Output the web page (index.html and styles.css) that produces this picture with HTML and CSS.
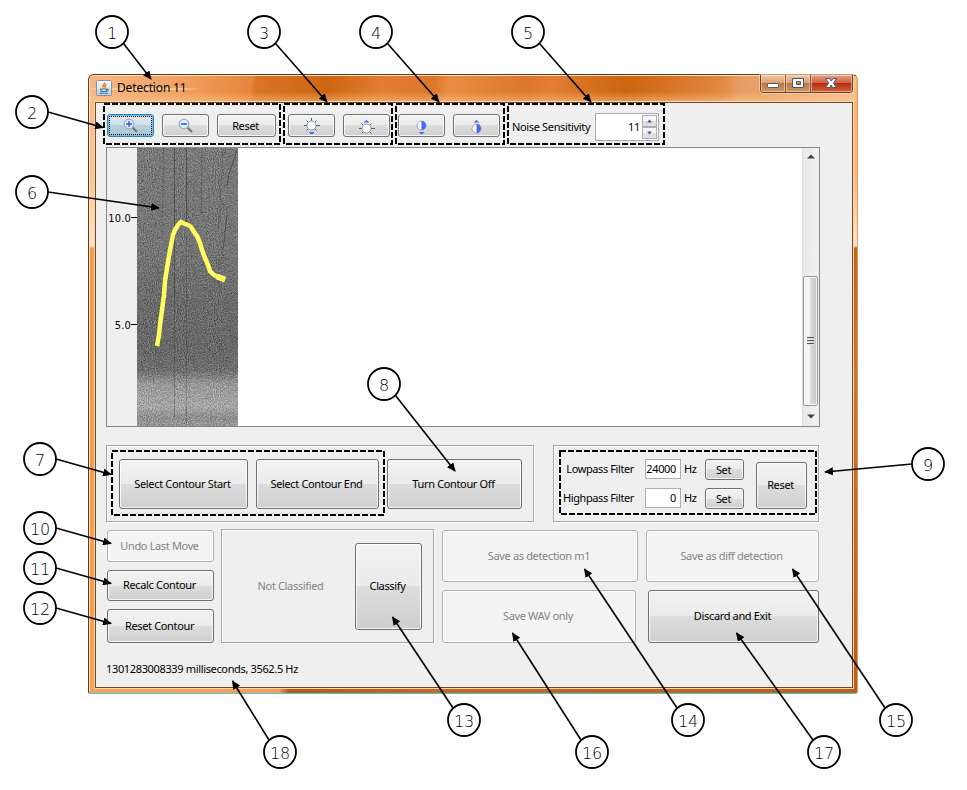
FILE: index.html
```html
<!DOCTYPE html>
<html lang="en">
<head>
<meta charset="utf-8">
<title>Detection 11</title>
<link rel="stylesheet" href="styles.css">
</head>
<body>
<div class="window">
  <header class="titlebar">
    <svg class="app-icon" width="16" height="16" viewBox="0 0 16 16">
      <defs><linearGradient id="ic" x2="0" y2="1"><stop offset="0" stop-color="#fdfdfd"/><stop offset="1" stop-color="#b9cbd8"/></linearGradient></defs>
      <rect x=".5" y=".5" width="15" height="15" rx="1" fill="url(#ic)" stroke="#8295a5"/>
      <path d="M8.500 2.500c1 1.500-2.500 2.500-1.500 5M10.500 4.500c-2 1-2 1.500-1.200 3.500" fill="none" stroke="#e8741c" stroke-width="1.500"/>
      <path d="M4.500 9h6v2.500H5.200zM10.800 9.200c2-.6 2 1.600-.3 1.900M3.500 13.200h8.500" fill="none" stroke="#4b7796" stroke-width="1.100"/>
    </svg>
    <span class="title">Detection 11</span>
    <div class="caption">
      <span class="cap"><svg width="25" height="17"><rect x="6.500" y="8.500" width="11" height="4" rx="1" fill="#fff" stroke="#535666"/></svg></span>
      <span class="cap"><svg width="25" height="17"><path d="M6.500 3.500h11v9h-11z M10.500 6.500h4v3h-4z" fill="#fff" fill-rule="evenodd" stroke="#535666"/></svg></span>
      <span class="cap close"><svg width="42" height="17"><path d="M14.500 3.500h4l1.800 2.500 1.800-2.500h3.400l-3 4.500 3 4.500h-4l-1.400-2.500-1.600 2.500h-4l3.200-4.500z" fill="#fff" stroke="#535666"/></svg></span>
    </div>
  </header>
  <main class="client">
    <div class="toolbar">
      <button class="btn tool focused"><svg width="18" height="18" viewBox="0 0 18 18"><path d="M10.500 10.500l4.500 4.500" stroke="#777" stroke-width="2.200"/><circle cx="7" cy="7" r="4.800" fill="#e4ecff" stroke="#9badd6" stroke-width="1.300"/><path d="M4 7h6M7 4v6" stroke="#3558dd" stroke-width="1.400"/></svg></button>
      <button class="btn tool"><svg width="18" height="18" viewBox="0 0 18 18"><path d="M10.500 10.500l4.500 4.500" stroke="#777" stroke-width="2.200"/><circle cx="7" cy="7" r="4.800" fill="#e4ecff" stroke="#9badd6" stroke-width="1.300"/><path d="M4 7h6" stroke="#3558dd" stroke-width="1.600"/></svg></button>
      <button class="btn tool reset">Reset</button>
      <button class="btn tool group"><svg width="18" height="18" viewBox="0 0 18 18"><path d="M8.500 1v3M1 8.500h3M13 8.500h4M3.500 3.500l2 2M13.500 3.500l-2 2M3.500 13.500l2-2M13.500 13.500l-2-2" stroke="#4a528f"/><circle cx="8.500" cy="8.500" r="4.500" fill="#fff" stroke="#8a98a8"/><path d="M6 15h5.500l-1.500 2h-2.500z" fill="#4668f0"/></svg></button>
      <button class="btn tool"><svg width="18" height="18" viewBox="0 0 18 18"><path d="M1 11.500h3M13 11.500h4M3.500 6.500l2 2M13.500 6.500l-2 2M3.500 16.500l2-2M13.500 16.500l-2-2" stroke="#4a528f"/><circle cx="8.500" cy="11.500" r="4.500" fill="#fff" stroke="#8a98a8"/><path d="M5.500 5.500l3-2.500 3 2.500z" fill="#4668f0"/></svg></button>
      <button class="btn tool"><svg width="18" height="18" viewBox="0 0 18 18"><circle cx="8.500" cy="8.500" r="4.500" fill="#fff" stroke="#9aa3b5"/><path d="M8.500 4a4.500 4.500 0 0 1 0 9zM6 15h5.500l-1.500 2h-2.500z" fill="#4668f0"/></svg></button>
      <button class="btn tool"><svg width="18" height="18" viewBox="0 0 18 18"><circle cx="8.500" cy="11.500" r="4.500" fill="#fff" stroke="#9aa3b5"/><path d="M8.500 7a4.500 4.500 0 0 1 0 9zM5.500 5.500l3-2.500 3 2.500z" fill="#4668f0"/></svg></button>
      <label class="noise">Noise Sensitivity</label>
      <div class="spinner"><span>11</span>
        <div class="arrows">
          <i><svg width="13" height="10"><path d="M4 6.500h5L6.500 3.500z" fill="#4257a5"/></svg></i>
          <i><svg width="13" height="10"><path d="M4 3.500h5L6.500 6.500z" fill="#4257a5"/></svg></i>
        </div>
      </div>
    </div>

    <div class="viewport">
      <svg class="spectrum" width="131" height="278" viewBox="107 148 131 278">
        <defs>
          <linearGradient id="sg" x2="0" y2="1">
            <stop offset="0" stop-color="#797979"/><stop offset=".35" stop-color="#757575"/>
            <stop offset=".55" stop-color="#6b6b6b"/><stop offset=".72" stop-color="#686868"/>
            <stop offset=".8" stop-color="#6e6e6e"/><stop offset=".85" stop-color="#989898"/>
            <stop offset=".93" stop-color="#a6a6a6"/><stop offset=".97" stop-color="#8e8e8e"/><stop offset="1" stop-color="#969696"/>
          </linearGradient>
          <filter id="grain" x="0" y="0" width="1" height="1" color-interpolation-filters="sRGB">
            <feTurbulence type="fractalNoise" baseFrequency=".97 .73" numOctaves="3" seed="11"/>
            <feColorMatrix values=".5 .5 0 0 0 .5 .5 0 0 0 .5 .5 0 0 0 0 0 0 0 1" result="n"/>
            <feComposite in="SourceGraphic" in2="n" operator="arithmetic" k2="1" k3=".62" k4="-.31"/>
            <feColorMatrix values="1 0 0 0 0 0 1 0 0 0 0 0 1 0 0 0 0 0 0 1"/>
          </filter>
        </defs>
        <rect x="107" y="148" width="30" height="278" fill="#efefef"/>
        <rect x="137" y="148" width="101" height="278" fill="url(#sg)" filter="url(#grain)"/>
        <g fill="none" stroke="#333" stroke-opacity=".55">
          <path d="M174.500 148v152M186.500 148v75"/>
          <path d="M174.500 300v120M186.500 235v188M163.500 148l-1 70M202 150l-1 65M223 150l-3 50M221 200l-3 30M219 260v28" stroke-opacity=".3"/>
          <path d="M237 150l-8 24-2 12M227 215l-4 35"/>
        </g>
        <path d="M157 346L159 335L160 325L162 310L164 295L165 281L167 268L169 256L171 245L173 235L175 230L178 225L181 222L184 223.500L188 225L191 227L194 232L197 236L200 243L202 250L205 258L208 265L210 271L214 275L218 277L225 280" fill="none" stroke="#ffff5f" stroke-width="4.500"/>
        <path d="M217 276.500l8 3" stroke="#ffff5f" stroke-width="6"/>
        <path d="M131 217.500h6M131 324.500h6" stroke="#000"/>
        <text x="131" y="222" text-anchor="end" class="axis">10.0</text>
        <text x="131" y="329" text-anchor="end" class="axis">5.0</text>
      </svg>
      <div class="blank"></div>
      <div class="scrollbar">
        <svg width="16" height="17"><path d="M4 10.500h8l-4-4z" fill="#444"/></svg>
        <div class="thumb"><b></b><b></b><b></b></div>
        <svg width="16" height="20"><path d="M4 8.500h8l-4 4z" fill="#444"/></svg>
      </div>
    </div>

    <div class="row panels">
      <section class="panel contour">
        <button class="btn start">Select Contour Start</button>
        <button class="btn end">Select Contour End</button>
        <button class="btn off">Turn Contour Off</button>
      </section>
      <section class="panel filters">
        <div class="fields">
          <label>Lowpass Filter</label><span class="field">24000</span><span>Hz</span><button class="btn">Set</button>
          <label>Highpass Filter</label><span class="field">0</span><span>Hz</span><button class="btn">Set</button>
        </div>
        <button class="btn filter-reset">Reset</button>
      </section>
    </div>

    <div class="row lower">
      <div class="moves">
        <button class="btn undo" disabled>Undo Last Move</button>
        <button class="btn recalc">Recalc Contour</button>
        <button class="btn clear">Reset Contour</button>
      </div>
      <section class="panel classify">
        <span class="state">Not Classified</span>
        <button class="btn classify-btn">Classify</button>
      </section>
      <div class="saves">
        <div class="row"><button class="btn m1" disabled>Save as detection m1</button><button class="btn diff" disabled>Save as diff detection</button></div>
        <div class="row second"><button class="btn wav" disabled>Save WAV only</button><button class="btn exit">Discard and Exit</button></div>
      </div>
    </div>
    <footer class="status">1301283008339 milliseconds, 3562.5 Hz</footer>
  </main>
</div>

<svg class="callouts" width="967" height="790" viewBox="0 0 967 790">
  <defs><marker id="head" markerUnits="userSpaceOnUse" markerWidth="9" markerHeight="8" refX="8" refY="4" orient="auto"><path d="M0 0L9 4L0 8z"/></marker></defs>
  <g class="dashes">
    <rect x="104" y="104" width="176" height="40"/>
    <rect x="284" y="104" width="108" height="40"/>
    <rect x="396" y="104" width="108" height="40"/>
    <rect x="508" y="104" width="156" height="40"/>
    <rect x="112" y="451" width="272" height="64"/>
    <rect x="560" y="451" width="256" height="63"/>
  </g>
  <g class="arrows-out">
    <path d="M123.500 43.500L151 79"/><path d="M48 112L103 127.500"/><path d="M275.500 43.500L327 102"/><path d="M387.500 43.500L439 102"/><path d="M539.500 43.500L591 102"/>
    <path d="M48 192L159 208"/><path d="M56 459L111 474.500"/><path d="M395.500 395.500L455 471"/><path d="M912 464L825 472"/>
    <path d="M56 528L111 543.500"/><path d="M56 568L111 583.500"/><path d="M56 608L111 623.500"/>
    <path d="M453 708L392.500 617"/><path d="M677 708L584.500 569"/><path d="M885 708L792.500 569"/><path d="M581 740L512.500 633"/><path d="M813 740L736.500 633"/><path d="M269 740L232.500 681"/>
  </g>
  <g class="rings">
    <circle cx="112" cy="32" r="16"/><circle cx="32" cy="112" r="16"/><circle cx="264" cy="32" r="16"/><circle cx="376" cy="32" r="16"/><circle cx="528" cy="32" r="16"/>
    <circle cx="32" cy="192" r="16"/><circle cx="40" cy="459" r="16"/><circle cx="384" cy="384" r="16"/><circle cx="928" cy="464" r="16"/>
    <circle cx="40" cy="528" r="16"/><circle cx="40" cy="568" r="16"/><circle cx="40" cy="608" r="16"/>
    <circle cx="464" cy="720" r="16"/><circle cx="688" cy="720" r="16"/><circle cx="896" cy="720" r="16"/><circle cx="592" cy="752" r="16"/><circle cx="824" cy="752" r="16"/><circle cx="280" cy="752" r="16"/>
  </g>
  <g class="numbers">
    <text x="112" y="39">1</text><text x="32" y="119">2</text><text x="264" y="39">3</text><text x="376" y="39">4</text><text x="528" y="39">5</text>
    <text x="32" y="199">6</text><text x="40" y="466">7</text><text x="384" y="391">8</text><text x="928" y="471">9</text>
    <text x="40" y="535">10</text><text x="40" y="575">11</text><text x="40" y="615">12</text>
    <text x="464" y="727">13</text><text x="688" y="727">14</text><text x="896" y="727">15</text><text x="592" y="759">16</text><text x="824" y="759">17</text><text x="280" y="759">18</text>
  </g>
</svg>
</body>
</html>
```
FILE: styles.css
```css
* { box-sizing: border-box; }
body { margin: 0; width: 967px; height: 790px; overflow: hidden; background: #fff; padding: 74px 0 0 88px; font: 11px/13px "Noto Sans", sans-serif; letter-spacing: -.35px; color: #000; }
.window {
  width: 770px; height: 620px; padding: 0 5px 6px 6px;
  border: 1px solid #6b3710; border-bottom-color: #55c5dc; border-right-color: #e9964e; border-radius: 6px 6px 3px 3px;
  background:
    linear-gradient(90deg, #f4a459, #f4a053 190px, #b25a14 200px, #c46822 45%, #b9601a) bottom / 100% 7px no-repeat,
    linear-gradient(#f6b888, #f9c595 100px, #fbe3cf 171px, #f09a4e 173px, #f4a256) left / 8px 100% no-repeat,
    linear-gradient(#f5b27a, #f9bd8a 110px, #fce6d4 171px, #bd641d 173px, #c97430 300px, #b8601a) right / 8px 100% no-repeat,
    #e88b40;
  box-shadow: inset 1px 1px #fde0c0;
}
.titlebar { height: 26px; display: flex; align-items: flex-start; margin: 1px -4px 0 -5px; padding: 0 0 0 6px;
  background:
    linear-gradient(rgba(255,255,255,.03) 0 60%, rgba(255,205,150,.55)),
    radial-gradient(ellipse at 52px 13px, rgba(255,240,225,.7), rgba(255,230,205,.5) 50px, transparent 65px),
    linear-gradient(100deg, #f6b581, #ee9b55 100px, #e58136 160px, #d97020 165px, #cd6009 235px, #e07a2b 290px, #db7324 340px, #e9893c 355px, #d97325 430px, #e07a2c 455px, #ca6007 530px, #db7628 590px, #e1853c 625px, #e59a5e 640px, #f0a76f 690px, #f8bd8b); }
.app-icon { margin-top: 4px; }
.title { margin: 4px 0 0 5px; font-size: 12px; line-height: 16px; letter-spacing: -.15px; }
.caption { margin: -1px 0 0 auto; display: flex; height: 18px; border: 1px solid #66402a; border-top: 0; border-radius: 0 0 4px 4px; overflow: hidden; box-shadow: 0 0 0 1px rgba(255,225,195,.6); margin-right: 3px; }
.cap { width: 25px; background: linear-gradient(#f2c9a4, #d9a172 45%, #b77846 50%, #d09866); border-right: 1px solid #80583c; box-shadow: inset 0 0 0 1px rgba(255,235,215,.5); }
.cap.close { width: 41px; border: 0; background: linear-gradient(#e5a58f, #cf6044 45%, #b62e10 50%, #d66238); }
.cap svg { display: block; }
.client { height: 586px; width: 758px; border: 1px solid #754721; background: #efefef; padding: 10px 0 0 10px; box-shadow: 0 0 0 1px #fbd8b4; }
.btn { font: inherit; letter-spacing: inherit; color: #000; padding: 0 2px 2px 0; border: 1px solid #707070; border-radius: 3px; white-space: nowrap; flex: none;
  background: linear-gradient(#f2f2f2, #ebebeb 50%, #ddd 50%, #cfcfcf); box-shadow: inset 0 0 0 1px rgba(255,255,255,.8); }
.btn:disabled { color: #838383; border-color: #adb2b5; background: #f4f4f4; }
.toolbar { display: flex; height: 28px; padding-left: 1px; gap: 8px; }
.tool { width: 47px; height: 23px; margin-top: 1px; padding: 0; display: flex; justify-content: center; align-items: center; }
.tool.reset { width: 59px; padding: 0 2px 1px 0; }
.tool.group { margin-left: 4px; }
.tool.focused { border-color: #3c7fb1; background: linear-gradient(#dfeaf0, #d3e1e8 50%, #b9d0dc 50%, #a9c5d3); outline: 1px dotted #000; outline-offset: -3px; box-shadow: inset 0 0 0 1px #5fc4e8; }
.noise { width: 79px; margin: 7px -4px 0 4px; white-space: nowrap; }
.spinner { width: 64px; height: 28px; border: 1px solid #abadb3; background: #fff; display: flex; justify-content: flex-end; padding: 1px; }
.spinner span { margin: 5px 2px 0 0; }
.arrows { width: 15px; display: flex; flex-direction: column; }
.arrows i { height: 12px; border: 1px solid #abadb3; background: linear-gradient(#f7f7f7 50%, #e0e0e0 50%); }
.arrows svg { display: block; }
.viewport { margin-top: 6px; width: 714px; height: 280px; border: 1px solid #828790; background: #fff; display: flex; }
.axis { font: 11px "DejaVu Sans Condensed", "DejaVu Sans", sans-serif; letter-spacing: .2px; }
.blank { flex: 1; }
.scrollbar { width: 17px; border-left: 1px solid #dedede; background: linear-gradient(90deg, #e8e8e8, #f2f2f2); display: flex; flex-direction: column; }
.scrollbar svg { display: block; }
.thumb { height: 130px; width: 15px; margin-top: auto; border: 1px solid #999; border-radius: 2px; background: linear-gradient(90deg, #f5f5f5 0 45%, #dcdce0 46%, #c5c5ca); box-shadow: inset 0 0 0 1px #f5f5f5; display: flex; flex-direction: column; gap: 1px; justify-content: center; align-items: center; }
.thumb b { width: 7px; height: 2px; border-top: 1px solid #555; background: #ddd; }
.row { display: flex; }
.panels { margin-top: 18px; gap: 19px; }
.panel { border: 1px solid #a6a6a6; box-shadow: 1px 1px #fff, inset 1px 1px #fff; display: flex; flex: none; }
.contour { width: 428px; height: 77px; padding: 13px 0 0 12px; gap: 8px; }
.contour .btn { height: 50px; }
.contour .start { width: 129px; }
.contour .end { width: 123px; }
.contour .off { width: 135px; }
.filters { width: 266px; height: 77px; padding: 13px 0 0 6px; }
.fields { display: grid; grid-template-columns: 74px 11px 36px 3px 13px 8px 39px; grid-template-rows: 21px 21px; row-gap: 8px; white-space: nowrap; line-height: 19px; }
.fields label { text-align: right; letter-spacing: -.4px; }
.fields > :nth-child(4n+1) { grid-column: 1; }
.fields > :nth-child(4n+2) { grid-column: 3; }
.fields > :nth-child(4n+3) { grid-column: 5; }
.fields > :nth-child(4n) { grid-column: 7; }
.field { height: 20px; border: 1px solid #abadb3; background: #fff; text-align: right; padding-right: 4px; line-height: 17px; }
.filter-reset { width: 51px; height: 47px; margin: 3px 0 0 12px; }
.lower { margin-top: 7px; }
.moves { display: flex; flex-direction: column; width: 115px; padding: 1px 7px 0 1px; gap: 8px; }
.undo { height: 32px; }
.recalc { height: 31px; }
.clear { height: 34px; }
.classify { width: 213px; height: 114px; align-items: flex-start; }
.state { width: 133px; padding: 49px 0 0 4px; text-align: center; color: #838383; }
.classify-btn { width: 67px; height: 87px; margin-top: 13px; }
.saves { padding: 1px 0 0 8px; }
.saves .row { gap: 8px; }
.saves .second { margin-top: 8px; gap: 12px; }
.m1 { width: 196px; height: 52px; }
.diff { width: 173px; height: 52px; }
.wav { width: 194px; height: 53px; }
.exit { width: 171px; height: 53px; }
.status { margin-top: 19px; }
.callouts { position: absolute; left: 0; top: 0; pointer-events: none; }
.dashes { fill: none; stroke: #000; stroke-width: 2; stroke-dasharray: 6 2; }
.arrows-out { stroke: #000; stroke-width: 1.6; fill: none; }
.arrows-out path { marker-end: url(#head); }
.rings { fill: #fff; stroke: #000; stroke-width: 1.8; }
.numbers { font: 200 16px "DejaVu Sans", sans-serif; letter-spacing: -.3px; text-anchor: middle; }
```
